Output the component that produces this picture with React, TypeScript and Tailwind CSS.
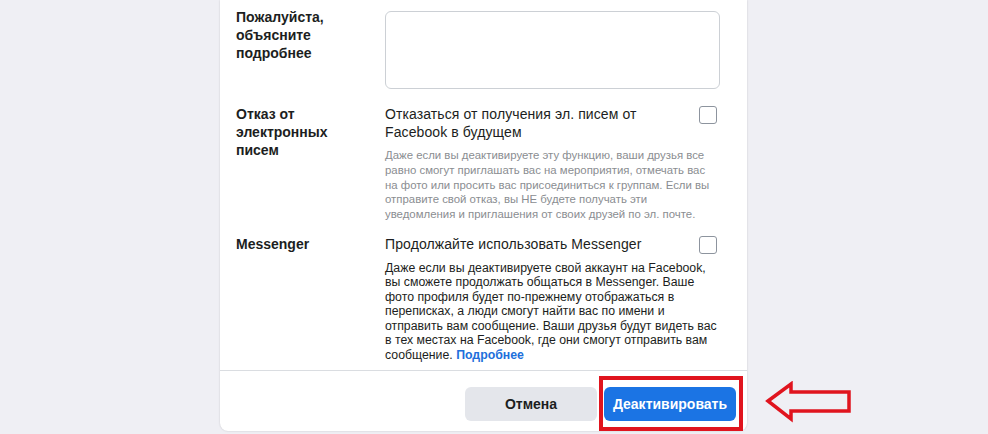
import React from 'react';

const font = { fontFamily: '"Liberation Sans", Arial, sans-serif' };

const Label: React.FC<{ children: React.ReactNode }> = ({ children }) => (
  <div className="w-[149px] shrink-0 pr-[38px] text-[14px] leading-[18px] font-semibold text-[#1c1e21]">
    {children}
  </div>
);

const Checkbox: React.FC = () => (
  <div className="mt-[1px] mr-[3px] h-[18px] w-[18px] shrink-0 rounded-[3px] border-[1.5px] border-[#8d949e] bg-white" />
);

const App: React.FC = () => {
  return (
    <div className="relative h-[434px] w-[988px] overflow-hidden bg-[#efeff4]" style={font}>
      <div className="ml-[220px] w-[527px] rounded-b-lg bg-white shadow-[0_0_2px_rgba(0,0,0,0.18)]">
        <div className="pl-4 pr-[27px] pb-2">
          {/* explain */}
          <div className="flex pt-2">
            <Label>Пожалуйста, объясните подробнее</Label>
            <div className="flex-1">
              <div className="mt-[3px] h-[78px] rounded-md border border-[#ccd0d5] bg-white" />
            </div>
          </div>

          {/* email opt out */}
          <div className="mt-4 flex">
            <Label>Отказ от электронных писем</Label>
            <div className="flex-1">
              <div className="flex items-start justify-between gap-3">
                <div className="w-[300px] text-[14px] leading-[18px] tracking-[0.1px] text-[#1c1e21]">
                  Отказаться от получения эл. писем от Facebook в будущем
                </div>
                <Checkbox />
              </div>
              <p className="mt-[7px] text-[11.4px] leading-[14.75px] text-[#8a8d91]">
                Даже если вы деактивируете эту функцию, ваши друзья все равно смогут приглашать вас на мероприятия, отмечать вас на фото или просить вас присоединиться к группам. Если вы отправите свой отказ, вы НЕ будете получать эти уведомления и приглашения от своих друзей по эл. почте.
              </p>
            </div>
          </div>

          {/* messenger */}
          <div className="mt-[13px] flex">
            <Label>Messenger</Label>
            <div className="flex-1">
              <div className="flex items-start justify-between gap-3">
                <div className="text-[14px] leading-[18px] tracking-[0.1px] text-[#1c1e21]">Продолжайте использовать Messenger</div>
                <Checkbox />
              </div>
              <p className="mt-[7px] text-[12.3px] leading-[14.5px] text-[#1c1e21]">
                Даже если вы деактивируете свой аккаунт на Facebook, вы сможете продолжать общаться в Messenger. Ваше фото профиля будет по-прежнему отображаться в переписках, а люди смогут найти вас по имени и отправить вам сообщение. Ваши друзья будут видеть вас в тех местах на Facebook, где они смогут отправить вам сообщение.{' '}
                <span className="font-semibold text-[#216fdb]">Подробнее</span>
              </p>
            </div>
          </div>
        </div>

        {/* footer */}
        <div className="flex justify-end gap-[7px] border-t border-[#dadde1] pt-4 pb-[10px] pr-[11px]">
          <button className="h-[34px] w-[132px] rounded-md bg-[#e4e6eb] text-[14px] font-bold text-[#1c1e21]">
            Отмена
          </button>
          <div className="relative">
            <button className="h-[34px] w-[132px] rounded-md bg-[#1b74e4] text-[14px] font-bold text-white">
              Деактивировать
            </button>
            <div className="pointer-events-none absolute -left-[5px] -right-[7px] -top-[11px] -bottom-[10px] border-4 border-[#e0141e]" />
          </div>
        </div>
      </div>

      {/* annotation arrow */}
      <svg className="absolute left-[764px] top-[381px]" width="92" height="44" viewBox="0 0 92 44">
        <polygon
          points="4,20 27,3 27,11 85,11 85,30 27,30 27,38"
          fill="none"
          stroke="#e0141e"
          strokeWidth="3.5"
          strokeLinejoin="miter"
        />
      </svg>
    </div>
  );
};

export default App;
